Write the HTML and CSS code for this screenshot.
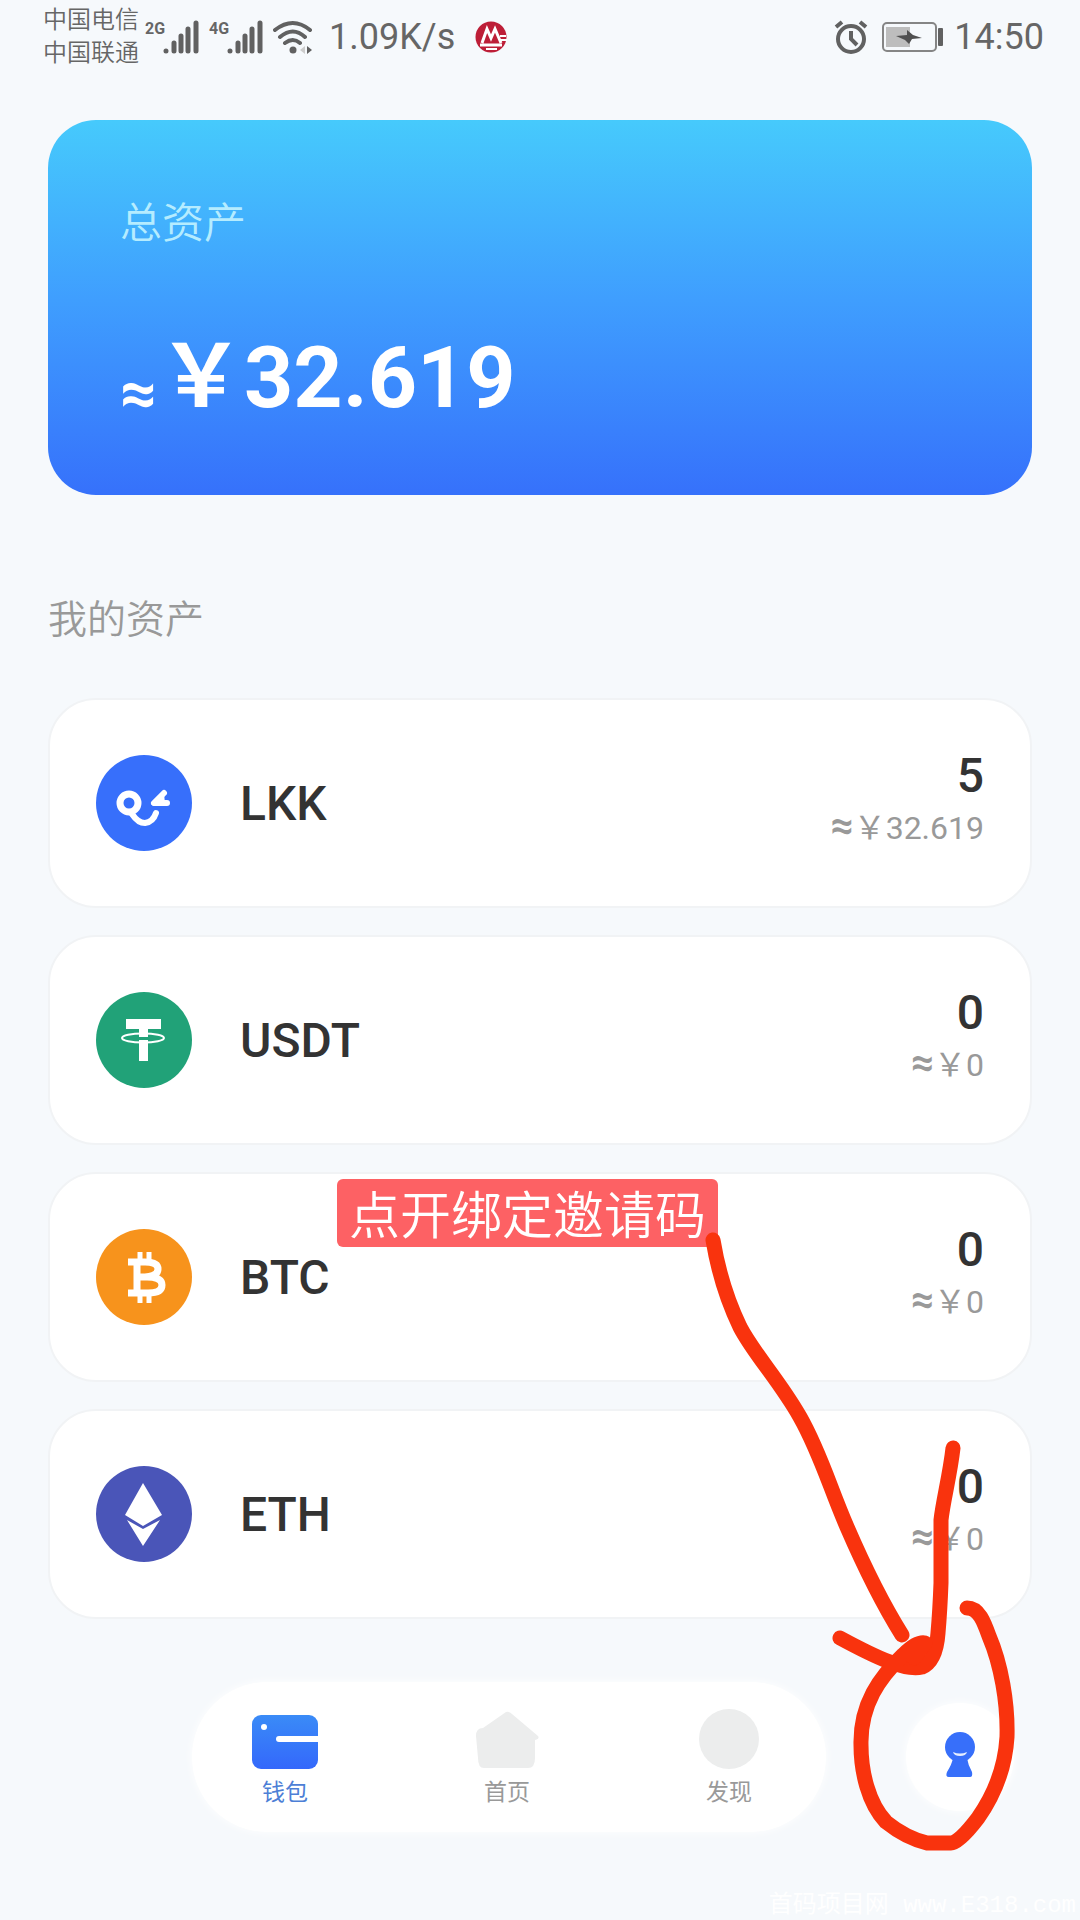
FILE: index.html
```html
<!DOCTYPE html>
<html lang="zh-CN">
<head>
<meta charset="utf-8">
<meta name="viewport" content="width=device-width">
<title>钱包</title>
<link rel="stylesheet" href="styles.css">
</head>
<body>
<header class="status">
  <div class="carriers"><span>中国电信</span><span>中国联通</span></div>
  <div class="signal"><span class="net">2G</span>
    <svg width="36" height="34" viewBox="0 0 36 34" fill="none" stroke="#616161" stroke-width="5" stroke-linecap="round"><path d="M3 31v0M11 23v8M18 16v15M25 9v22M33 3v28"/></svg>
  </div>
  <div class="signal"><span class="net">4G</span>
    <svg width="36" height="34" viewBox="0 0 36 34" fill="none" stroke="#616161" stroke-width="5" stroke-linecap="round"><path d="M3 31v0M11 23v8M18 16v15M25 9v22M33 3v28"/></svg>
  </div>
  <svg class="wifi" width="40" height="34" viewBox="0 0 40 34" fill="none" stroke="#616161" stroke-width="4" stroke-linecap="round"><path d="M2 10Q20-4 37 10M7 17Q20 6 32 17M12 23Q20 17 27 23"/><circle cx="20" cy="30" r="3.5" fill="#616161" stroke="none"/><path d="M34 26v8l5-4z" fill="#616161" stroke="none"/><path d="M32 26v8l-5-4z" fill="#ccc" stroke="none"/></svg>
  <span class="speed">1.09K/s</span>
  <svg class="bank" width="32" height="34" viewBox="0 0 32 34"><circle cx="16" cy="17" r="15.5" fill="#bd1e37"/><path d="M7 23L12 9l4 9 4-9 6 14M5 25h22" fill="none" stroke="#fff" stroke-width="3"/><path d="M25 16h6M26 20h6M11 29h11" stroke="#fff" stroke-width="2"/></svg>
  <span class="grow"></span>
  <svg width="34" height="34" viewBox="0 0 34 34" fill="none" stroke="#616161" stroke-width="4"><circle cx="17" cy="19" r="13"/><path d="M17 11v8l6 6M2 7l6-5M32 7l-6-5"/></svg>
  <svg class="battery" width="62" height="32" viewBox="0 0 62 32"><rect x="1" y="2" width="53" height="28" rx="4" fill="none" stroke="#858585" stroke-width="2"/><path d="M4 6h24v20H4z" fill="#bdbdbd"/><path d="M14 15l11-1V9l6 5 9 3-10 1-3 5-4-4z" fill="#505050"/><rect x="56" y="7" width="5" height="18" rx="1" fill="#616161"/></svg>
  <time class="clock">14:50</time>
</header>

<main>
  <section class="total">
    <h1>总资产</h1>
    <p class="amount"><span class="approx">≈</span><span class="yen">￥</span>32.619</p>
  </section>

  <h2>我的资产</h2>
  <ul class="assets">
    <li>
      <svg class="coin" viewBox="0 0 96 96"><circle cx="48" cy="48" r="48" fill="#376ffb"/><g fill="none" stroke="#fff" stroke-linecap="round" stroke-linejoin="round"><circle cx="33" cy="48" r="9" stroke-width="7"/><path d="M36 59Q42 68 49 68Q57 67 60 58" stroke-width="6"/><path d="M68 38L58 48H71" stroke-width="6"/></g><path d="M68 36L55 49q1 2 4 2h10z" fill="#fff"/></svg>
      <span class="name">LKK</span>
      <div class="values"><strong>5</strong><span class="fiat"><b>≈</b><i>￥</i>32.619</span></div>
    </li>
    <li>
      <svg class="coin" viewBox="0 0 96 96"><circle cx="48" cy="48" r="48" fill="#21a278"/><path d="M30 27h35v10H52v32h-9V37H30z" fill="#fff"/><path d="M43 45h9v3h-9z" fill="#21a278"/><ellipse cx="47" cy="46" rx="21" ry="4.500" fill="none" stroke="#fff" stroke-width="2"/></svg>
      <span class="name">USDT</span>
      <div class="values"><strong>0</strong><span class="fiat"><b>≈</b><i>￥</i>0</span></div>
    </li>
    <li>
      <svg class="coin" viewBox="0 0 96 96"><circle cx="48" cy="48" r="48" fill="#f7931c"/><g fill="none" stroke="#fff"><path d="M32 33h17q13 0 13 7t-13 8H40h11q15 0 15 8t-14 8H32M41 33v31" stroke-width="7"/><path d="M44 23v9M53 23v9M44 65v9M53 65v9" stroke-width="5"/></g></svg>
      <span class="name">BTC</span>
      <div class="values"><strong>0</strong><span class="fiat"><b>≈</b><i>￥</i>0</span></div>
    </li>
    <li>
      <svg class="coin" viewBox="0 0 96 96"><circle cx="48" cy="48" r="48" fill="#4a55b8"/><path d="M47 17L66 49 47 60 29 49zM31 54l16 9 17-9-17 26z" fill="#fff"/></svg>
      <span class="name">ETH</span>
      <div class="values"><strong>0</strong><span class="fiat"><b>≈</b><i>￥</i>0</span></div>
    </li>
  </ul>
</main>

<nav class="dock">
  <div class="tabs">
    <a class="tab active" href="#wallet">
      <svg width="66" height="62" viewBox="0 0 66 62"><defs><linearGradient id="w" x1="0" y1="0" x2="0" y2="1"><stop offset="0" stop-color="#3a8bf7"/><stop offset="1" stop-color="#3468fb"/></linearGradient></defs><rect y="7" width="66" height="54" rx="9" fill="url(#w)"/><circle cx="12" cy="19" r="3" fill="#fff"/><path d="M27 31h39" stroke="#fff" stroke-width="6"/><circle cx="27" cy="31" r="3" fill="#fff"/></svg>
      <span>钱包</span></a>
    <a class="tab" href="#home">
      <svg width="66" height="62" viewBox="0 0 66 62"><path d="M32 4q3-1 6 2l26 22q2 3-3 4v18q0 10-7 10H10q-6 0-6-10L2 28q0-8 7-8z" fill="#eceded"/></svg>
      <span>首页</span></a>
    <a class="tab" href="#discover">
      <svg width="66" height="62" viewBox="0 0 66 62"><circle cx="33" cy="31" r="30" fill="#eceded"/></svg>
      <span>发现</span></a>
  </div>
  <a class="profile" href="#me" aria-label="我的">
    <svg width="32" height="46" viewBox="0 0 32 46"><path d="M9 26h14q1 7 5 14 1 5-2 5H5q-4 0-2-5 5-8 6-14z" fill="#376ffa"/><circle cx="16" cy="15" r="15" fill="#376ffa"/><path d="M9 20q7 3 14 0-1 4-7 4t-7-4z" fill="#e4edff"/></svg>
  </a>
</nav>
<footer class="watermark">首码项目网 www.E318.com</footer>

<div class="note">
  <p>点开绑定邀请码</p>
  <svg width="380" height="680" viewBox="700 1179 380 680" fill="none" stroke="#f9330d" stroke-width="15" stroke-linecap="round" stroke-linejoin="round">
    <path d="M713 1240C719 1276 728 1302 740 1327C754 1354 779 1380 800 1417C820 1452 830 1488 847 1527C863 1564 882 1603 902 1635"/>
    <path d="M953 1448C950 1475 943 1501 941 1520V1583Q940 1610 938 1633Q936 1661 922 1667C905 1671 877 1658 840 1638"/>
    <path d="M967 1608C979 1608 984 1622 989 1636C1001 1664 1008 1703 1007 1737C1005 1770 992 1798 978 1818Q959 1843 951 1843H927Q906 1838 886 1822C868 1803 861 1771 861 1745C860 1704 880 1677 903 1655Q917 1641 925 1643L914 1658"/>
  </svg>
</div>
</body>
</html>
```
FILE: styles.css
```css
* { box-sizing: border-box; margin: 0; padding: 0; }
body {
  position: relative;
  min-height: 100vh;
  display: flex;
  flex-direction: column;
  background: #f6f9fc;
  color: #333;
  font-family: Roboto, "Noto Sans CJK SC", sans-serif;
}
svg { display: block; flex: none; }

.status {
  display: flex;
  align-items: center;
  height: 72px;
  padding: 2px 36px 0 43px;
  color: #666;
}
.carriers {
  display: flex;
  flex-direction: column;
  margin-right: 6px;
  font-size: 24px;
  font-weight: 350;
  line-height: 33px;
}
.signal { display: flex; margin-right: 10px; }
.net { width: 18px; font: 700 16px/18px "Roboto", sans-serif; }
.speed { margin-left: 16px; font-size: 36px; }
.bank { margin-left: 20px; }
.grow { flex: 1; }
.battery { margin: 0 10px 0 14px; }
.clock { font-size: 36px; }

main { padding: 48px 48px 0; }
.total {
  height: 375px;
  padding: 74px 72px;
  border-radius: 48px;
  background: linear-gradient(#46cafc, #3f9efe 48%, #3671fb);
  color: #fff;
}
.total h1 {
  color: #b5ecff;
  font-size: 42px;
  font-weight: 350;
  line-height: 60px;
}
.amount {
  display: flex;
  align-items: baseline;
  margin-top: 64px;
  font-size: 86px;
  font-weight: 700;
  line-height: 104px;
}
.approx { align-self: flex-end; width: 38px; font-size: 64px; line-height: 72px; }
.yen { font-family: "Noto Sans CJK SC", sans-serif; }
h2 {
  padding: 95px 0 48px;
  color: #999;
  font-size: 39px;
  font-weight: 350;
  line-height: 60px;
}
.assets { display: grid; gap: 27px; list-style: none; }
.assets li {
  display: flex;
  align-items: center;
  height: 210px;
  padding: 0 46px;
  border: 2px solid #f1f3f5;
  border-radius: 48px;
  background: #fff;
}
.coin { width: 96px; height: 96px; }
.name { flex: 1; margin-left: 48px; padding-top: 2px; font-size: 48px; font-weight: 500; line-height: 56px; }
.values { display: flex; flex-direction: column; align-items: flex-end; padding-bottom: 8px; }
.values strong { font-size: 48px; font-weight: 500; line-height: 54px; }
.fiat {
  display: flex;
  align-items: baseline;
  color: #999;
  font-size: 32px;
  line-height: 44px;
}
.fiat b { font-size: 40px; line-height: 44px; }
.fiat i { font-family: "Noto Sans CJK SC", sans-serif; font-style: normal; }

.dock {
  display: flex;
  align-items: center;
  justify-content: space-between;
  padding: 63px 66px 56px 192px;
}
.tabs {
  display: flex;
  justify-content: space-between;
  width: 634px;
  height: 150px;
  padding: 26px 64px 26px 60px;
  border-radius: 75px;
  background: #fff;
  box-shadow: 0 0 10px #fff;
}
.tab {
  display: flex;
  flex-direction: column;
  align-items: center;
  color: #999;
  font-size: 23px;
  line-height: 34px;
  gap: 6px;
  text-decoration: none;
}
.active { color: #4d7fd6; }
.profile {
  display: flex;
  align-items: center;
  justify-content: center;
  width: 108px;
  height: 108px;
  padding-bottom: 4px;
  border-radius: 50%;
  background: #fff;
  box-shadow: 0 0 10px #fff;
}
.watermark {
  margin-top: auto;
  padding-right: 4px;
  text-align: right;
  color: #fff;
  font: 24px/28px "Liberation Mono", "Noto Sans CJK SC", monospace;
}

/* Hand-drawn pointer laid over the asset list and the dock */
.note {
  position: absolute;
  top: 1179px;
  right: 0;
  display: flex;
  pointer-events: none;
}
.note p {
  height: 68px;
  padding: 0 12px;
  margin-right: -18px;
  border-radius: 6px;
  background: #fd6164;
  color: #fff;
  font-size: 51px;
  font-weight: 350;
  line-height: 76px;
}
```
